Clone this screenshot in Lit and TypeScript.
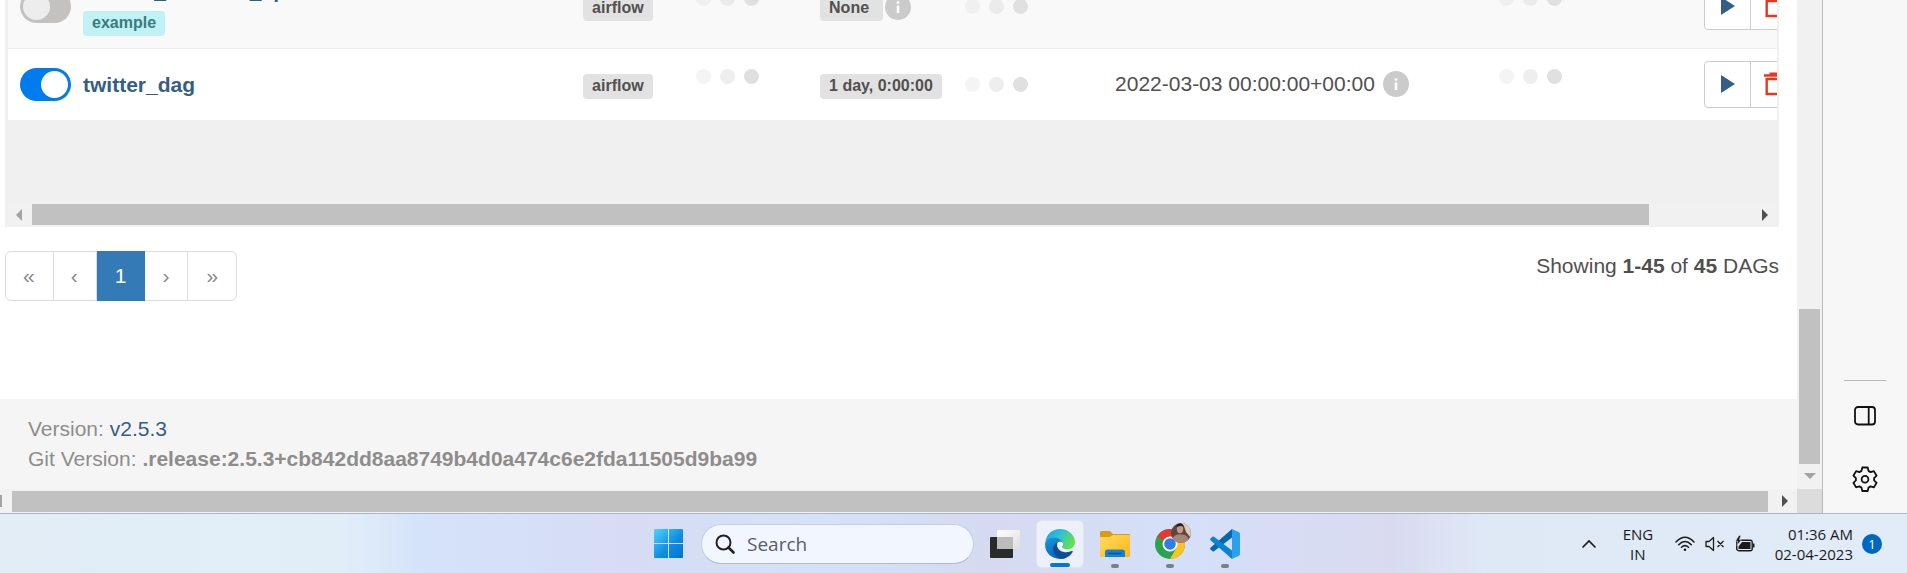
import { LitElement, html, css, svg } from "lit";
import { customElement, property } from "lit/decorators.js";

interface Dag {
  id: string;
  tags: string[];
  owner: string;
  schedule: string;
  scheduleInfo: boolean;
  nextRun: string;
  active: boolean;
}

const DAGS: Dag[] = [
  { id: "tutorial_taskflow_api", tags: ["example"], owner: "airflow", schedule: "None\u00a0", scheduleInfo: true, nextRun: "", active: false },
  { id: "twitter_dag", tags: [], owner: "airflow", schedule: "1 day, 0:00:00", scheduleInfo: false, nextRun: "2022-03-03 00:00:00+00:00", active: true },
];

const infoIcon = html`<svg class="info" width="26" height="26" viewBox="0 0 26 26" role="img" aria-label="Details">
  <circle cx="13" cy="13" r="13" fill="#cbcbcb" />
  <path d="M11.7 7.3h2.6v2.5h-2.6zM11.7 11.6h2.6v7.4h-2.6z" fill="#fff" />
</svg>`;

const dots = html`<span class="dots"><i></i><i></i><i></i></span>`;

@customElement("dag-table")
class DagTable extends LitElement {
  static styles = css`
    :host { display: block; background: #f0f0f0; padding: 0 2px 2px 3px; }
    .clip { overflow: hidden; padding-bottom: 84px; }
    table { border-collapse: collapse; table-layout: fixed; width: 103%; background: #fff; }
    td { padding: 0; height: 71px; vertical-align: middle; border-top: 1px solid #efefef; white-space: nowrap; }
    tr.muted td { background: #f9f9f9; height: 83px; }
    .c-toggle { width: 75px; }
    .c-owner { width: 113px; }
    .c-runs { width: 124px; }
    .c-schedule { width: 145px; }
    .c-last { width: 150px; }
    .c-next { width: 384px; }
    .c-recent { width: 205px; }
    .c-actions { width: 126px; }
    .toggle { padding-left: 12px; }
    .switch { display: block; position: relative; width: 51px; height: 33px; }
    .switch input { position: absolute; inset: 0; width: 100%; height: 100%; margin: 0; opacity: 0; }
    .switch span { display: block; box-sizing: border-box; height: 33px; padding: 3px; border-radius: 17px; background: #c4c2c1; }
    .switch span::after { content: ""; display: block; width: 27px; height: 27px; border-radius: 50%; background: #ededed; }
    .switch input:checked + span { background: #017cee; }
    .switch input:checked + span::after { margin-left: auto; background: #fff; }
    .name { display: block; font-weight: bold; line-height: 30px; color: #345e84; text-decoration: none; }
    .tag, .label { display: inline-block; box-sizing: border-box; height: 25px; padding: 0 9px; border-radius: 4px; font-size: 16px; line-height: 23px; font-weight: bold; vertical-align: top; text-decoration: none; }
    .tag { background: #c0f1f4; color: #3a7c7e; margin: 5px 0 1px; }
    .label { background: #e2e2e2; color: #51504f; }
    .labels { display: flex; align-items: center; gap: 2px; padding-top: 4px; }
    .labels svg { margin-bottom: 4px; }
    .dots { display: flex; gap: 9px; }
    .dots i { width: 15px; height: 15px; border-radius: 50%; background: #e0e0e0; }
    .dots i:nth-child(1) { opacity: 0.35; }
    .dots i:nth-child(2) { opacity: 0.55; }
    .raised { padding-bottom: 16px; }
    .next { display: flex; align-items: center; gap: 8px; padding-bottom: 2px; }
    .actions { display: flex; }
    .actions button { box-sizing: border-box; width: 47px; height: 47px; margin: 0; padding: 0 0 2px; border: 1px solid #ccc; background: #fff; display: grid; place-items: center; }
    .actions button:first-child { border-radius: 4px 0 0 4px; }
    .actions button + button { border-radius: 0 4px 4px 0; margin-left: -1px; }
    svg { display: block; flex: none; }
    .bar { display: flex; align-items: center; height: 21px; background: #f1f1f1; padding: 0 9px 0 8px; }
    .track { flex: 1; margin: 0 10px; height: 21px; }
    .thumb { width: 94%; height: 21px; background: #c1c1c1; }
  `;

  private row(d: Dag) {
    return html`<tr class=${d.active ? "" : "muted"}>
      <td class="toggle"><label class="switch"><input type="checkbox" aria-label=${d.id} .checked=${d.active} /><span></span></label></td>
      <td><a class="name" href="#">${d.id}</a>${d.tags.map((t) => html`<a class="tag" href="#">${t}</a>`)}</td>
      <td><div class="labels"><a class="label" href="#">${d.owner}</a></div></td>
      <td><div class="raised">${dots}</div></td>
      <td><div class="labels"><a class="label" href="#">${d.schedule}</a>${d.scheduleInfo ? infoIcon : ""}</div></td>
      <td>${dots}</td>
      <td>${d.nextRun ? html`<div class="next"><time>${d.nextRun}</time>${infoIcon}</div>` : ""}</td>
      <td><div class="raised">${dots}</div></td>
      <td><div class="actions">
        <button aria-label="Trigger DAG"><svg width="14" height="18" viewBox="0 0 14 18"><path d="M0 0l14 9-14 9z" fill="#345e84" /></svg></button>
        <button aria-label="Delete DAG"><svg width="20" height="24" viewBox="0 0 20 24"><path d="M0 3.500h20M5.500 1.800h9M2.700 7v15h14.600V7z" fill="none" stroke="#e43921" stroke-width="2.4" /></svg></button>
      </div></td>
    </tr>`;
  }

  render() {
    return html`<div class="clip"><table>
        <colgroup><col class="c-toggle" /><col /><col class="c-owner" /><col class="c-runs" /><col class="c-schedule" /><col class="c-last" /><col class="c-next" /><col class="c-recent" /><col class="c-actions" /></colgroup>
        <tbody>${DAGS.map((d) => this.row(d))}</tbody>
      </table></div>
      <div class="bar">
        <svg width="6" height="12" viewBox="0 0 6 12"><path d="M6 0v12L0 6z" fill="#a3a3a3" /></svg>
        <div class="track"><div class="thumb"></div></div>
        <svg width="6" height="12" viewBox="0 0 6 12"><path d="M0 0v12l6-6z" fill="#505050" /></svg>
      </div>`;
  }
}

const gear = svg`<path d="M10.300 1.500h5.400l.8 3.400 2.100 1.200 3.300-1 2.700 4.600-2.500 2.400v2.300l2.500 2.400-2.700 4.600-3.300-1-2.100 1.200-.8 3.400h-5.400l-.8-3.400-2.100-1.200-3.300 1-2.700-4.600 2.500-2.400v-2.300L1.400 9.700l2.700-4.600 3.300 1 2.100-1.200z"/><circle cx="13" cy="13.200" r="3.400"/>`;

@customElement("task-bar")
class TaskBar extends LitElement {
  @property() time = "01:36 AM";
  @property() date = "02-04-2023";

  static styles = css`
    :host {
      display: grid; grid-template-columns: 1fr auto 1fr; align-items: center; box-sizing: border-box; height: 60px;
      border-top: 1px solid #a9b6c9; color: #1b1b1b; font: 15px/20px "Open Sans", "Noto Sans", sans-serif;
      background: linear-gradient(90deg, #e2edf6 0, #e1eef8 18%, #d5e3fa 22%, #d6dcf4 33%, #d5e1f8 43%, #d5daf0 52%, #d5e0f8 62%, #d9daf0 73%, #dfe9f6 78%, #e1ecf8 100%);
    }
    svg { display: block; flex: none; }
    button { border: 0; margin: 0; padding: 0; background: none; color: inherit; font: inherit; }
    .apps { grid-column: 2; display: flex; align-items: center; padding-right: 4px; }
    .search { display: flex; align-items: center; gap: 12px; box-sizing: border-box; width: 273px; height: 40px; margin-left: 17px; padding: 0 13px; border: 1px solid #c3cfe4; border-bottom-color: #aebcd3; border-radius: 20px; background: #f2f6fe; }
    .search input { flex: 1; min-width: 0; border: 0; padding: 0; background: none; outline: 0; font: 19px/24px "Open Sans", "Noto Sans", sans-serif; color: #5b5e66; }
    .search input::placeholder { color: #5b5e66; opacity: 1; }
    .app { position: relative; display: grid; place-items: center; box-sizing: border-box; width: 48px; height: 48px; border-radius: 6px; margin-left: 7px; }
    .app.current { background: #edf0f9; border: 1px solid #e2e5f1; }
    .mark { position: absolute; left: 50%; bottom: 0; width: 8px; height: 4px; margin-left: -4px; border-radius: 2px; background: #7b7f8b; }
    .current .mark { width: 20px; margin-left: -10px; background: #0078d4; }
    .tray { grid-column: 3; justify-self: end; display: flex; align-items: center; padding-right: 25px; }
    .lang { width: 30px; margin: 0 22px 0 26px; text-align: center; }
    .status { display: flex; align-items: center; gap: 10px; }
    .clock { margin: 0 9px 0 20px; text-align: right; }
    .count { width: 20px; height: 20px; border-radius: 50%; background: #0067c0; color: #fff; font-size: 13px; line-height: 20px; text-align: center; }
  `;

  render() {
    return html`<div class="apps">
        <button aria-label="Start"><svg width="30" height="30" viewBox="0 0 30 30">
          <defs><linearGradient id="w" x1="0" y1="0" x2="30" y2="30" gradientUnits="userSpaceOnUse"><stop offset="0" stop-color="#4fd3ff" /><stop offset=".55" stop-color="#0f8de0" /><stop offset="1" stop-color="#0070d0" /></linearGradient></defs>
          <path fill="url(#w)" d="M1 0h13v14H0V1a1 1 0 011-1zM15 0h13a1 1 0 011 1v13H15zM0 15h14v14H1a1 1 0 01-1-1zM15 15h14v13a1 1 0 01-1 1H15z" /></svg></button>
        <label class="search"><svg width="20" height="20" viewBox="0 0 20 20" fill="none" stroke="#222"><circle cx="8.500" cy="8.500" r="7" stroke-width="2" /><path d="M13.500 13.500l5 5" stroke-width="2.600" stroke-linecap="round" /></svg>
          <input type="text" placeholder="Search" aria-label="Search" /></label>
        <button class="app" aria-label="Task view"><svg width="30" height="30" viewBox="0 0 30 30">
          <defs><linearGradient id="tv" x1="0" y1="0" x2="1" y2="1"><stop offset="0" stop-color="#fff" /><stop offset="1" stop-color="#dedede" /></linearGradient></defs>
          <rect x="0" y="8" width="23" height="21" rx="1" fill="#2a2a2a" /><rect x="7" y="1" width="23" height="19" rx="1" fill="url(#tv)" /><path d="M7 8h16v12H7z" fill="#bcbcbc" /></svg></button>
        <button class="app current" aria-label="Microsoft Edge"><svg width="30" height="30" viewBox="0 0 30 30">
          <defs>
            <linearGradient id="e1" x1="0" y1="0" x2="1" y2=".4"><stop offset="0" stop-color="#1c9fe0" /><stop offset=".5" stop-color="#2cc0d8" /><stop offset="1" stop-color="#62df52" /></linearGradient>
            <linearGradient id="e2" x1="0" y1="0" x2=".5" y2="1"><stop offset="0" stop-color="#1798dc" /><stop offset="1" stop-color="#0a62b8" /></linearGradient>
          </defs>
          <path fill="url(#e1)" d="M.3 13C1.500 5 7.500 0 15 0c9 0 15 6.500 15 12.800 0 4.500-3.300 7.400-7.500 7.400-3.700 0-5.700-1.300-5.700-2.300 0-.8 1.300-1.300 1.300-3.400 0-2.700-2.600-5.300-7-5.300C6 9.200 2 11 .3 13z" />
          <path fill="url(#e2)" d="M.1 14.500C.5 10.700 4.800 8.300 10 8.700c4.700.3 8.100 2.700 8.100 5.800-1-1.700-3-2.300-4.500-1.500-2.600 1.300-3.300 5-1.500 8.500 1.700 3.300 4.400 6 7.900 7.700-1.500.6-3.300.8-5 .8C6.500 30-.7 23.500.1 14.500z" />
          <path fill="#114d93" d="M13 13.300c-5 1.700-6.500 7.200-3.400 11.700 2.900 4.200 7.600 5.800 11.200 4 3.200-1.400 5.400-3.500 6.900-6 .4-.7-.2-1.200-.9-.9-5.500 2.500-13.500.8-14.400-4.600-.3-1.800 0-3.200.6-4.200z" />
          <path fill="#eef3fb" d="M12.600 13.800c2-1.700 4.700-1 5.500.7.100 2-1.300 2.600-1.300 3.400 0 .9 1.600 2 4 2.200-4 .9-7.800-.4-8.400-2.900-.3-1.300-.2-2.500.2-3.400z" /></svg><span class="mark"></span></button>
        <button class="app" aria-label="File Explorer"><svg width="30" height="30" viewBox="0 0 30 30">
          <defs><linearGradient id="f" x1="0" y1="0" x2="1" y2="1"><stop offset="0" stop-color="#ffda62" /><stop offset="1" stop-color="#fcb914" /></linearGradient></defs>
          <path d="M0 3.500Q0 2 1.500 2H10l3 3h16q1 0 1 1v6H0z" fill="#dc9b0c" /><path d="M0 8h9.500L13 6h17v21.500q0 .5-.5.500H.5q-.5 0-.5-.5z" fill="url(#f)" />
          <path d="M5 28v-5q0-2.500 2.500-2.500h15q2.500 0 2.500 2.500v5z" fill="#1583d1" /><path d="M8 24.500h13.500" stroke="#0b539b" stroke-width="1.500" /></svg><span class="mark"></span></button>
        <button class="app" aria-label="Google Chrome"><svg width="42" height="42" viewBox="-6 -6 42 42">
          <circle cx="15" cy="15" r="15" fill="#2da14c" /><path d="M15 15L2 7.500A15 15 0 0128 7.500z" fill="#e33b2e" /><path d="M15 7.500h13A15 15 0 0115 30l6.500-11.300z" fill="#fcc31e" />
          <circle cx="15" cy="15" r="7.500" fill="#fff" /><circle cx="15" cy="15" r="5.800" fill="#2f7de9" />
          <circle cx="26" cy="4" r="10" fill="#594840" /><path d="M26-6a10 10 0 019 14l-4-5-2-6z" fill="#dccdbd" /><path d="M17.500 9.500q3-5 9-4 6 0 7 5a10 10 0 01-16-1z" fill="#a98379" /><ellipse cx="25" cy="0" rx="3.200" ry="4.200" fill="#c79a83" /><path d="M21.500-1.500q0-4 3.500-4t3.500 3.500q-3-2-7 .5z" fill="#251c1b" /></svg><span class="mark"></span></button>
        <button class="app" aria-label="Visual Studio Code"><svg width="30" height="30" viewBox="0 0 30 30">
          <path d="M22 0v8.500L4 22.300q-.8.500-1.500 0L.5 20.500q-.8-.9 0-1.700z" fill="#0069ac" /><path d="M22 30v-8.500L4 7.700q-.8-.5-1.500 0L.5 9.500q-.8.900 0 1.700z" fill="#0a84cf" /><path d="M22 0l7 3.300q1 .5 1 1.700v20q0 1.200-1 1.700L22 30z" fill="#2ba0ee" /></svg><span class="mark"></span></button>
      </div>
      <div class="tray">
        <button aria-label="Show hidden icons"><svg width="16" height="10" viewBox="0 0 16 10"><path d="M2 8l6-6 6 6" fill="none" stroke="#1b1b1b" stroke-width="1.700" stroke-linecap="round" /></svg></button>
        <div class="lang">ENG<br />IN</div>
        <div class="status">
          <svg width="20" height="16" viewBox="0 0 20 16" fill="none" stroke="#1b1b1b" stroke-width="1.500" stroke-linecap="round"><path d="M1 6q9-9.500 18 0M3.700 8.700q6.300-6.500 12.600 0M6.500 11.300q3.500-3.400 7 0" /><circle cx="10" cy="13.700" r="1.300" fill="#1b1b1b" stroke="none" /></svg>
          <svg width="20" height="16" viewBox="0 0 20 16" fill="none" stroke="#1b1b1b" stroke-width="1.300" stroke-linejoin="round"><path d="M1 5.500h3L8.500 1.500v13L4 10.500H1zM12.500 5l6 6M18.500 5l-6 6" /></svg>
          <svg width="20" height="18" viewBox="0 0 20 18"><rect x="1.700" y="5.200" width="15.500" height="10.500" rx="2" fill="none" stroke="#1b1b1b" stroke-width="1.400" /><path d="M7 7h8.500v7H3.500v-2.500zM18 8.500h1.500v4H18z" fill="#1b1b1b" /><path d="M4 .5L.5 6h2L2 10.500 6.500 4.700H4.300L6 .5z" fill="#1b1b1b" stroke="#e1ecf8" stroke-width=".5" /></svg>
        </div>
        <div class="clock">${this.time}<br />${this.date}</div>
        <div class="count">1</div>
      </div>`;
  }
}

@customElement("app-root")
class AppRoot extends LitElement {
  static styles = css`
    :host { display: flex; flex-direction: column; height: 100vh; overflow: hidden; background: #fff; color: #51504f; font: 21px/30px "Liberation Sans", Arial, sans-serif; }
    svg { display: block; }
    .window { flex: 1; min-height: 0; display: grid; grid-template-columns: minmax(0, 1fr) 25px 85px; grid-template-rows: minmax(0, 1fr) 24px; }
    .page { display: flex; flex-direction: column; justify-content: flex-end; overflow: hidden; }
    main { padding: 0 18px 0 5px; }
    .below { display: flex; justify-content: space-between; align-items: flex-start; padding: 24px 0 98px; }
    .pages { display: flex; box-sizing: border-box; height: 50px; border: 1px solid #ddd; border-radius: 6px; }
    .pages a { padding: 0 18px 0 17px; line-height: 48px; color: #888; text-decoration: none; border-right: 1px solid #ddd; }
    .pages a:last-child { border-right: 0; padding: 0 18px; }
    .pages .on { margin: -1px 0; padding: 1px 19px 1px 18px; border: 0; background: #337ab7; color: #fff; }
    footer { padding: 15px 28px; background: #f5f5f5; color: #8e8d8c; }
    footer a { color: #345e84; text-decoration: none; }
    .vbar { display: flex; flex-direction: column; align-items: center; background: #f1f1f1; padding-bottom: 10px; }
    .vspace { flex: 1; }
    .vthumb { width: 21px; height: 155px; margin-bottom: 9px; background: #c1c1c1; }
    .hbar { display: flex; align-items: center; background: #f1f1f1; padding-right: 9px; }
    .hthumb { flex: 1; height: 21px; margin: 1px 14px 0 10px; background: #c1c1c1; }
    .corner { background: #dcdcdc; }
    .side { grid-column: 3; grid-row: 1 / 3; display: flex; flex-direction: column; align-items: center; justify-content: flex-end; box-sizing: border-box; border-left: 1px solid #bababa; background: #f7f7f7; padding-bottom: 21px; }
    .side hr { width: 42px; margin: 0 0 25px; border: 0; border-top: 1px solid #bababa; }
    .side button { border: 0; padding: 0; margin: 0; background: none; }
    .side button + button { margin-top: 40px; }
  `;

  render() {
    return html`<div class="window">
        <div class="page">
          <main>
            <dag-table></dag-table>
            <div class="below">
              <nav class="pages" aria-label="Pages"><a href="#">«</a><a href="#">‹</a><a class="on" href="#" aria-current="page">1</a><a href="#">›</a><a href="#">»</a></nav>
              <div>Showing <strong>1-45</strong> of <strong>45</strong> DAGs</div>
            </div>
          </main>
          <footer>
            <div>Version: <a href="#">v2.5.3</a></div>
            <div>Git Version: <strong>.release:2.5.3+cb842dd8aa8749b4d0a474c6e2fda11505d9ba99</strong></div>
          </footer>
        </div>
        <div class="vbar"><div class="vspace"></div><div class="vthumb"></div><svg width="12" height="6" viewBox="0 0 12 6"><path d="M0 0h12L6 6z" fill="#a3a3a3" /></svg></div>
        <aside class="side">
          <hr />
          <button aria-label="Toggle side panel"><svg width="22" height="20" viewBox="0 0 22 20" fill="none" stroke="#111" stroke-width="1.800"><rect x="1" y="1" width="20" height="17.500" rx="3" /><path d="M14.700 1v17.500" /></svg></button>
          <button aria-label="Settings"><svg width="26" height="26" viewBox="0 0 26 26" fill="none" stroke="#111" stroke-width="1.800" stroke-linejoin="round">${gear}</svg></button>
        </aside>
        <div class="hbar"><svg width="2" height="12" viewBox="0 0 2 12"><path d="M0 0h2v12H0z" fill="#a3a3a3" /></svg><div class="hthumb"></div><svg width="6" height="12" viewBox="0 0 6 12"><path d="M0 0v12l6-6z" fill="#505050" /></svg></div>
        <div class="corner"></div>
      </div>
      <task-bar></task-bar>`;
  }
}
